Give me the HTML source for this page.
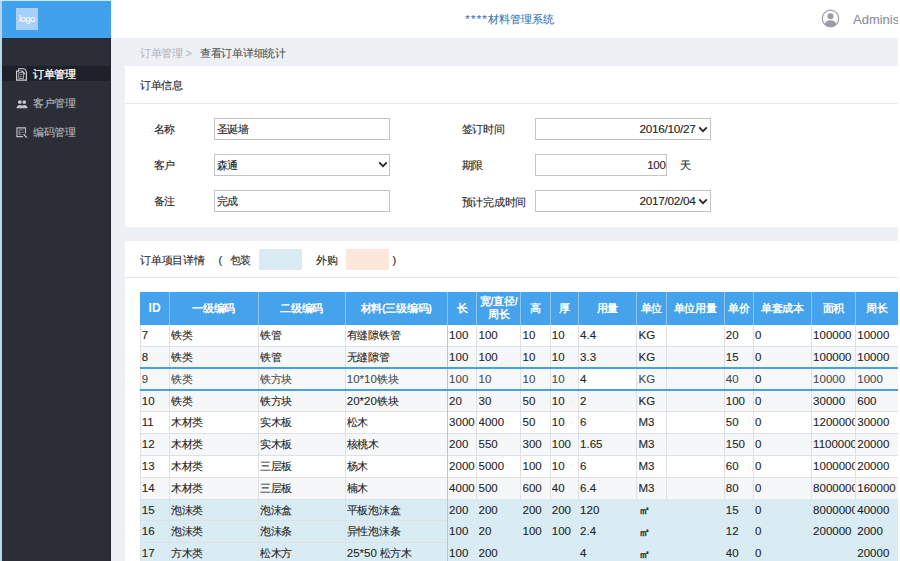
<!DOCTYPE html>
<html><head><meta charset="utf-8">
<style>
*{box-sizing:border-box;margin:0;padding:0}
html,body{width:900px;height:561px;overflow:hidden;background:#fff}
body{position:relative;font-family:"Liberation Sans",sans-serif;color:#333;font-size:11px;-webkit-text-stroke:0.1px currentColor}
.abs{position:absolute}
#side{left:0;top:0;width:111px;height:561px;background:#2b2e37}
#sidetop{left:0;top:0;width:111px;height:37.5px;background:#42a1ec}
#logo{left:16px;top:8px;width:22px;height:22px;background:#a6d0f5;color:#fff;font-size:9px;line-height:22px;text-align:center;letter-spacing:-0.3px}
#ledge{left:0;top:0;width:1.5px;height:561px;background:#b9d4ee}
.nav{left:1.5px;width:109.5px;height:16px;color:#b5b7bd;font-size:11px;letter-spacing:-0.3px;line-height:16px}
.nav .t{position:absolute;left:31.5px;top:0}
.nav.act{background:#1f2128;color:#fff;-webkit-text-stroke:0.3px #fff}
#hdr{left:111px;top:0;width:789px;height:37.5px;background:#fff}
#title{left:465.3px;top:11px;color:#3a78b8;font-size:11.3px;line-height:16px;white-space:nowrap}
#admin{left:853px;top:11px;color:#8c8c9a;font-size:13px;line-height:17px;white-space:nowrap}
#main{left:111px;top:37.5px;width:787px;height:523.5px;background:#edf0f4}
#rstrip{left:898px;top:0;width:2px;height:561px;background:#fff}
#crumb{left:140px;top:45px;font-size:11px;letter-spacing:-0.3px;line-height:16px;color:#555;white-space:nowrap}
#crumb .g{color:#b3b8bf}
.card{background:#fff}
#card1{left:125px;top:65.5px;width:772.5px;height:161px}
#card2{left:125px;top:241px;width:772.5px;height:320px}
.sep{height:1px;background:#e6e9ee}
.ct{font-size:11px;letter-spacing:-0.3px;line-height:16px;color:#252525;white-space:nowrap}
.lbl{font-size:11px;letter-spacing:-0.3px;line-height:16px;color:#252525;white-space:nowrap}
.hl{height:1px;background:#dfe0e3}
.vl{width:1px;background:#e0e1e4}
.hvl{width:1px;background:#8ec5f1}
.th{color:#fff;font-weight:bold;-webkit-text-stroke:0;letter-spacing:-0.3px;text-align:center;font-size:11px;white-space:nowrap}
.td{font-size:11px;letter-spacing:-0.3px;line-height:16px;color:#252525;white-space:nowrap;overflow:hidden}
.td.g{color:#4a4a4a}
.td.n{font-size:11.5px;letter-spacing:0}
.nn{font-size:11.5px;letter-spacing:0}
.inp{border:1px solid #c4c4c4;background:#fff;height:22px;font-size:11px;letter-spacing:-0.3px;line-height:20px;padding:0 2px 0 1.5px;color:#222;white-space:nowrap}
</style></head><body>
<div id="side" class="abs"></div>
<div id="sidetop" class="abs"></div>
<div id="logo" class="abs">logo</div>
<div id="ledge" class="abs"></div>
<div class="abs" style="left:109.5px;top:37.5px;width:1px;height:523.5px;background:#23262d"></div>
<div class="abs" style="left:0;top:0;width:111px;height:1px;background:#cfe6fa"></div>
<div class="abs nav act" style="top:66.4px;height:14.6px;line-height:14.6px"><span class="t" style="top:0.5px">订单管理</span></div>
<div class="abs nav" style="top:94.8px"><span class="t">客户管理</span></div>
<div class="abs nav" style="top:124.2px"><span class="t">编码管理</span></div>
<svg class="abs" style="left:16px;top:67.5px" width="11" height="13" viewBox="0 0 11 13"><path d="M0.6 3.1 L2.8 3.1 L2.8 0.7 L7.5 0.7 Q10.3 1.1 10.4 5 L10.4 12.1 L0.6 12.1 Z" fill="none" stroke="#d4d5d9" stroke-width="1.1"/><rect x="2.8" y="4.7" width="4.8" height="5.6" fill="none" stroke="#b9bbc0" stroke-width="0.9"/><path d="M4.5 2.7 Q8.5 3 8.8 6.5" fill="none" stroke="#e6e7ea" stroke-width="1"/><path d="M4 6.6 H6.4 M4 8.4 H6.4" stroke="#a8aab0" stroke-width="0.7"/></svg>
<svg class="abs" style="left:15.5px;top:98.5px" width="12" height="10" viewBox="0 0 12 10"><circle cx="3.8" cy="3.1" r="1.9" fill="#c3c5cc"/><circle cx="8.3" cy="3.1" r="1.9" fill="#c3c5cc"/><path d="M0.5 9.2 Q0.8 6.2 3.8 6 Q6 6 6 7 Q6.2 6 8.3 6 Q11.4 6.2 11.6 9.2 Z" fill="#c3c5cc"/></svg>
<svg class="abs" style="left:15.5px;top:126.5px" width="12" height="12" viewBox="0 0 12 12"><path d="M9.5 6.5 V0.9 H0.9 V9.6 H7" fill="none" stroke="#bfc1c8" stroke-width="1.1"/><path d="M3 2.9 V8 M3 2.9 H7.6 M3 5.3 H5 M5.4 5.3 H7.6 M3 7.6 H5.6" stroke="#9ea0a7" stroke-width="0.8"/><path d="M7.6 7.3 L10.9 10.6" stroke="#c6c8ce" stroke-width="1.3"/></svg>

<div id="hdr" class="abs"></div>
<div id="title" class="abs"><span style="letter-spacing:1.2px;font-size:11.5px">****</span>材料管理系统</div>
<svg class="abs" style="left:821px;top:9px" width="19" height="19" viewBox="0 0 19 19"><circle cx="9.5" cy="9.5" r="8.3" fill="none" stroke="#9fa0ab" stroke-width="1.2"/><circle cx="9.5" cy="7.2" r="3" fill="#9a9ba6"/><path d="M3.6 15.2 Q5 11.4 9.5 11.2 Q14 11.4 15.4 15.2 Q12.8 17.8 9.5 17.8 Q6.2 17.8 3.6 15.2 Z" fill="#9a9ba6"/></svg>
<div id="admin" class="abs">Adminis</div>
<div id="main" class="abs"></div>
<div id="crumb" class="abs"><span class="g">订单管理 &gt;</span><span style="position:absolute;left:60px;top:0">查看订单详细统计</span></div>

<div id="card1" class="abs card"></div>
<div class="abs ct" style="left:140px;top:77px">订单信息</div>
<div class="abs sep" style="left:125px;top:102.6px;width:772.5px"></div>

<div class="abs lbl" style="left:153.8px;top:120.6px">名称</div>
<div class="abs inp" style="left:214px;top:117.5px;width:176px">圣诞墙</div>
<div class="abs lbl" style="left:153.8px;top:157px">客户</div>
<div class="abs inp" style="left:214px;top:154.2px;width:176px">森通</div>
<div class="abs lbl" style="left:153.8px;top:193.4px">备注</div>
<div class="abs inp" style="left:214px;top:190.4px;width:176px">完成</div>

<div class="abs lbl" style="left:461.8px;top:121px">签订时间</div>
<div class="abs inp" style="left:534.5px;top:117.5px;width:176px;text-align:right;padding-right:14px;font-size:11.8px">2016/10/27</div>
<div class="abs lbl" style="left:461.8px;top:157px">期限</div>
<div class="abs inp" style="left:534.5px;top:154.2px;width:132px;text-align:right;padding-right:0px;font-size:11.5px">100</div>
<div class="abs lbl" style="left:679.7px;top:157px">天</div>
<div class="abs lbl" style="left:461.8px;top:193.5px">预计完成时间</div>
<div class="abs inp" style="left:534.5px;top:190.4px;width:176px;text-align:right;padding-right:14px;font-size:11.8px">2017/02/04</div>

<svg class="abs" style="left:378px;top:160.5px" width="10" height="7" viewBox="0 0 10 7"><path d="M1.2 1.4 L5 5.2 L8.8 1.4" fill="none" stroke="#222" stroke-width="1.7"/></svg>
<svg class="abs" style="left:697.5px;top:125.5px" width="10" height="7" viewBox="0 0 10 7"><path d="M1.2 1.4 L5 5.2 L8.8 1.4" fill="none" stroke="#222" stroke-width="1.7"/></svg>
<svg class="abs" style="left:697.5px;top:197.5px" width="10" height="7" viewBox="0 0 10 7"><path d="M1.2 1.4 L5 5.2 L8.8 1.4" fill="none" stroke="#222" stroke-width="1.7"/></svg>
<div id="card2" class="abs card"></div>
<div class="abs ct" style="left:140.2px;top:252.1px">订单项目详情</div>
<div class="abs ct" style="left:218.6px;top:252.1px">(</div>
<div class="abs ct" style="left:229.8px;top:252.1px">包装</div>
<div class="abs" style="left:258.7px;top:248.5px;width:43.5px;height:21.3px;background:#d9ebf3"></div>
<div class="abs ct" style="left:316.2px;top:252.1px">外购</div>
<div class="abs" style="left:345.5px;top:248.5px;width:43.8px;height:21.3px;background:#fde7d9"></div>
<div class="abs ct" style="left:392.5px;top:252.1px">)</div>
<div class="abs sep" style="left:125px;top:277.3px;width:772.5px"></div>

<div class="abs" style="left:140px;top:292.3px;width:758.0px;height:32.3px;background:#45a2ec"></div>
<div class="abs" style="left:140px;top:324.60px;width:758.0px;height:22.10px;background:#fff"></div>
<div class="abs" style="left:140px;top:346.40px;width:758.0px;height:22.10px;background:#f6f7f8"></div>
<div class="abs" style="left:140px;top:368.20px;width:758.0px;height:22.10px;background:#f6f8fa"></div>
<div class="abs" style="left:578.3px;top:368.20px;width:58.4px;height:21.80px;background:#fff"></div>
<div class="abs" style="left:140px;top:390.00px;width:758.0px;height:22.10px;background:#f6f7f8"></div>
<div class="abs" style="left:140px;top:411.80px;width:758.0px;height:22.10px;background:#fff"></div>
<div class="abs" style="left:140px;top:433.60px;width:758.0px;height:22.10px;background:#f6f7f8"></div>
<div class="abs" style="left:140px;top:455.40px;width:758.0px;height:22.10px;background:#fff"></div>
<div class="abs" style="left:140px;top:477.20px;width:758.0px;height:22.10px;background:#f6f7f8"></div>
<div class="abs" style="left:140px;top:499.00px;width:758.0px;height:62.00px;background:#d9ebf3"></div>
<div class="abs hl" style="left:140px;top:345.90px;width:758.0px"></div>
<div class="abs hl" style="left:140px;top:367.70px;width:758.0px"></div>
<div class="abs hl" style="left:140px;top:389.50px;width:758.0px"></div>
<div class="abs hl" style="left:140px;top:411.30px;width:758.0px"></div>
<div class="abs hl" style="left:140px;top:433.10px;width:758.0px"></div>
<div class="abs hl" style="left:140px;top:454.90px;width:758.0px"></div>
<div class="abs hl" style="left:140px;top:476.70px;width:758.0px"></div>
<div class="abs hl" style="left:140px;top:498.50px;width:307.3px"></div>
<div class="abs hl" style="left:140px;top:520.30px;width:307.3px"></div>
<div class="abs hl" style="left:140px;top:542.10px;width:307.3px"></div>
<div class="abs vl" style="left:139.50px;top:324.6px;height:239.8px"></div>
<div class="abs vl" style="left:168.70px;top:324.6px;height:239.8px"></div>
<div class="abs vl" style="left:257.80px;top:324.6px;height:239.8px"></div>
<div class="abs vl" style="left:344.50px;top:324.6px;height:239.8px"></div>
<div class="abs vl" style="left:446.80px;top:324.6px;height:239.8px;background:#c2c4c8"></div>
<div class="abs vl" style="left:476.20px;top:324.6px;height:174.4px"></div>
<div class="abs vl" style="left:520.20px;top:324.6px;height:174.4px"></div>
<div class="abs vl" style="left:549.50px;top:324.6px;height:174.4px"></div>
<div class="abs vl" style="left:577.80px;top:324.6px;height:174.4px"></div>
<div class="abs vl" style="left:636.20px;top:324.6px;height:174.4px"></div>
<div class="abs vl" style="left:665.50px;top:324.6px;height:174.4px"></div>
<div class="abs vl" style="left:723.50px;top:324.6px;height:174.4px"></div>
<div class="abs vl" style="left:752.80px;top:324.6px;height:174.4px"></div>
<div class="abs vl" style="left:810.80px;top:324.6px;height:174.4px"></div>
<div class="abs vl" style="left:855.00px;top:324.6px;height:174.4px"></div>
<div class="abs hvl" style="left:168.70px;top:292.3px;height:32.3px"></div>
<div class="abs hvl" style="left:257.80px;top:292.3px;height:32.3px"></div>
<div class="abs hvl" style="left:344.50px;top:292.3px;height:32.3px"></div>
<div class="abs hvl" style="left:446.80px;top:292.3px;height:32.3px"></div>
<div class="abs hvl" style="left:476.20px;top:292.3px;height:32.3px"></div>
<div class="abs hvl" style="left:520.20px;top:292.3px;height:32.3px"></div>
<div class="abs hvl" style="left:549.50px;top:292.3px;height:32.3px"></div>
<div class="abs hvl" style="left:577.80px;top:292.3px;height:32.3px"></div>
<div class="abs hvl" style="left:636.20px;top:292.3px;height:32.3px"></div>
<div class="abs hvl" style="left:665.50px;top:292.3px;height:32.3px"></div>
<div class="abs hvl" style="left:723.50px;top:292.3px;height:32.3px"></div>
<div class="abs hvl" style="left:752.80px;top:292.3px;height:32.3px"></div>
<div class="abs hvl" style="left:810.80px;top:292.3px;height:32.3px"></div>
<div class="abs hvl" style="left:855.00px;top:292.3px;height:32.3px"></div>
<div class="abs th" style="left:140.0px;top:300.45px;width:29.2px;line-height:16px;font-size:12px;letter-spacing:0">ID</div>
<div class="abs th" style="left:169.2px;top:300.45px;width:89.1px;line-height:16px">一级编码</div>
<div class="abs th" style="left:258.3px;top:300.45px;width:86.7px;line-height:16px">二级编码</div>
<div class="abs th" style="left:345.0px;top:300.45px;width:102.3px;line-height:16px">材料(三级编码)</div>
<div class="abs th" style="left:447.3px;top:300.45px;width:29.4px;line-height:16px">长</div>
<div class="abs th" style="left:476.7px;top:295.45px;width:44.0px;line-height:13px">宽/直径/<br>周长</div>
<div class="abs th" style="left:520.7px;top:300.45px;width:29.3px;line-height:16px">高</div>
<div class="abs th" style="left:550.0px;top:300.45px;width:28.3px;line-height:16px">厚</div>
<div class="abs th" style="left:578.3px;top:300.45px;width:58.4px;line-height:16px">用量</div>
<div class="abs th" style="left:636.7px;top:300.45px;width:29.3px;line-height:16px">单位</div>
<div class="abs th" style="left:666.0px;top:300.45px;width:58.0px;line-height:16px">单位用量</div>
<div class="abs th" style="left:724.0px;top:300.45px;width:29.3px;line-height:16px">单价</div>
<div class="abs th" style="left:753.3px;top:300.45px;width:58.0px;line-height:16px">单套成本</div>
<div class="abs th" style="left:811.3px;top:300.45px;width:44.2px;line-height:16px">面积</div>
<div class="abs th" style="left:855.5px;top:300.45px;width:42.5px;line-height:16px">周长</div>
<div class="abs td n" style="left:141.8px;top:327.20px;width:27.4px">7</div>
<div class="abs td" style="left:171.0px;top:327.20px;width:87.3px">铁类</div>
<div class="abs td" style="left:260.1px;top:327.20px;width:84.9px">铁管</div>
<div class="abs td" style="left:346.8px;top:327.20px;width:100.5px">有缝隙铁管</div>
<div class="abs td n" style="left:449.1px;top:327.20px;width:27.6px">100</div>
<div class="abs td n" style="left:478.5px;top:327.20px;width:42.2px">100</div>
<div class="abs td n" style="left:522.5px;top:327.20px;width:27.5px">10</div>
<div class="abs td n" style="left:551.8px;top:327.20px;width:26.5px">10</div>
<div class="abs td n" style="left:580.1px;top:327.20px;width:56.6px">4.4</div>
<div class="abs td n" style="left:638.5px;top:327.20px;width:27.5px">KG</div>
<div class="abs td n" style="left:725.8px;top:327.20px;width:27.5px">20</div>
<div class="abs td n" style="left:755.1px;top:327.20px;width:56.2px">0</div>
<div class="abs td n" style="left:813.1px;top:327.20px;width:42.4px">100000</div>
<div class="abs td n" style="left:857.3px;top:327.20px;width:40.7px">10000</div>
<div class="abs td n" style="left:141.8px;top:349.00px;width:27.4px">8</div>
<div class="abs td" style="left:171.0px;top:349.00px;width:87.3px">铁类</div>
<div class="abs td" style="left:260.1px;top:349.00px;width:84.9px">铁管</div>
<div class="abs td" style="left:346.8px;top:349.00px;width:100.5px">无缝隙管</div>
<div class="abs td n" style="left:449.1px;top:349.00px;width:27.6px">100</div>
<div class="abs td n" style="left:478.5px;top:349.00px;width:42.2px">100</div>
<div class="abs td n" style="left:522.5px;top:349.00px;width:27.5px">10</div>
<div class="abs td n" style="left:551.8px;top:349.00px;width:26.5px">10</div>
<div class="abs td n" style="left:580.1px;top:349.00px;width:56.6px">3.3</div>
<div class="abs td n" style="left:638.5px;top:349.00px;width:27.5px">KG</div>
<div class="abs td n" style="left:725.8px;top:349.00px;width:27.5px">15</div>
<div class="abs td n" style="left:755.1px;top:349.00px;width:56.2px">0</div>
<div class="abs td n" style="left:813.1px;top:349.00px;width:42.4px">100000</div>
<div class="abs td n" style="left:857.3px;top:349.00px;width:40.7px">10000</div>
<div class="abs td g n" style="left:141.8px;top:370.80px;width:27.4px">9</div>
<div class="abs td g" style="left:171.0px;top:370.80px;width:87.3px">铁类</div>
<div class="abs td g" style="left:260.1px;top:370.80px;width:84.9px">铁方块</div>
<div class="abs td g" style="left:346.8px;top:370.80px;width:100.5px"><span class="nn">10*10</span>铁块</div>
<div class="abs td g n" style="left:449.1px;top:370.80px;width:27.6px">100</div>
<div class="abs td g n" style="left:478.5px;top:370.80px;width:42.2px">10</div>
<div class="abs td g n" style="left:522.5px;top:370.80px;width:27.5px">10</div>
<div class="abs td g n" style="left:551.8px;top:370.80px;width:26.5px">10</div>
<div class="abs td n" style="left:580.1px;top:370.80px;width:56.6px">4</div>
<div class="abs td g n" style="left:638.5px;top:370.80px;width:27.5px">KG</div>
<div class="abs td g n" style="left:725.8px;top:370.80px;width:27.5px">40</div>
<div class="abs td n" style="left:755.1px;top:370.80px;width:56.2px">0</div>
<div class="abs td g n" style="left:813.1px;top:370.80px;width:42.4px">10000</div>
<div class="abs td g n" style="left:857.3px;top:370.80px;width:40.7px">1000</div>
<div class="abs td n" style="left:141.8px;top:392.60px;width:27.4px">10</div>
<div class="abs td" style="left:171.0px;top:392.60px;width:87.3px">铁类</div>
<div class="abs td" style="left:260.1px;top:392.60px;width:84.9px">铁方块</div>
<div class="abs td" style="left:346.8px;top:392.60px;width:100.5px"><span class="nn">20*20</span>铁块</div>
<div class="abs td n" style="left:449.1px;top:392.60px;width:27.6px">20</div>
<div class="abs td n" style="left:478.5px;top:392.60px;width:42.2px">30</div>
<div class="abs td n" style="left:522.5px;top:392.60px;width:27.5px">50</div>
<div class="abs td n" style="left:551.8px;top:392.60px;width:26.5px">10</div>
<div class="abs td n" style="left:580.1px;top:392.60px;width:56.6px">2</div>
<div class="abs td n" style="left:638.5px;top:392.60px;width:27.5px">KG</div>
<div class="abs td n" style="left:725.8px;top:392.60px;width:27.5px">100</div>
<div class="abs td n" style="left:755.1px;top:392.60px;width:56.2px">0</div>
<div class="abs td n" style="left:813.1px;top:392.60px;width:42.4px">30000</div>
<div class="abs td n" style="left:857.3px;top:392.60px;width:40.7px">600</div>
<div class="abs td n" style="left:141.8px;top:414.40px;width:27.4px">11</div>
<div class="abs td" style="left:171.0px;top:414.40px;width:87.3px">木材类</div>
<div class="abs td" style="left:260.1px;top:414.40px;width:84.9px">实木板</div>
<div class="abs td" style="left:346.8px;top:414.40px;width:100.5px">松木</div>
<div class="abs td n" style="left:449.1px;top:414.40px;width:27.6px">3000</div>
<div class="abs td n" style="left:478.5px;top:414.40px;width:42.2px">4000</div>
<div class="abs td n" style="left:522.5px;top:414.40px;width:27.5px">50</div>
<div class="abs td n" style="left:551.8px;top:414.40px;width:26.5px">10</div>
<div class="abs td n" style="left:580.1px;top:414.40px;width:56.6px">6</div>
<div class="abs td n" style="left:638.5px;top:414.40px;width:27.5px">M3</div>
<div class="abs td n" style="left:725.8px;top:414.40px;width:27.5px">50</div>
<div class="abs td n" style="left:755.1px;top:414.40px;width:56.2px">0</div>
<div class="abs td n" style="left:813.1px;top:414.40px;width:42.4px">1200000</div>
<div class="abs td n" style="left:857.3px;top:414.40px;width:40.7px">30000</div>
<div class="abs td n" style="left:141.8px;top:436.20px;width:27.4px">12</div>
<div class="abs td" style="left:171.0px;top:436.20px;width:87.3px">木材类</div>
<div class="abs td" style="left:260.1px;top:436.20px;width:84.9px">实木板</div>
<div class="abs td" style="left:346.8px;top:436.20px;width:100.5px">核桃木</div>
<div class="abs td n" style="left:449.1px;top:436.20px;width:27.6px">200</div>
<div class="abs td n" style="left:478.5px;top:436.20px;width:42.2px">550</div>
<div class="abs td n" style="left:522.5px;top:436.20px;width:27.5px">300</div>
<div class="abs td n" style="left:551.8px;top:436.20px;width:26.5px">100</div>
<div class="abs td n" style="left:580.1px;top:436.20px;width:56.6px">1.65</div>
<div class="abs td n" style="left:638.5px;top:436.20px;width:27.5px">M3</div>
<div class="abs td n" style="left:725.8px;top:436.20px;width:27.5px">150</div>
<div class="abs td n" style="left:755.1px;top:436.20px;width:56.2px">0</div>
<div class="abs td n" style="left:813.1px;top:436.20px;width:42.4px">1100000</div>
<div class="abs td n" style="left:857.3px;top:436.20px;width:40.7px">20000</div>
<div class="abs td n" style="left:141.8px;top:458.00px;width:27.4px">13</div>
<div class="abs td" style="left:171.0px;top:458.00px;width:87.3px">木材类</div>
<div class="abs td" style="left:260.1px;top:458.00px;width:84.9px">三层板</div>
<div class="abs td" style="left:346.8px;top:458.00px;width:100.5px">杨木</div>
<div class="abs td n" style="left:449.1px;top:458.00px;width:27.6px">2000</div>
<div class="abs td n" style="left:478.5px;top:458.00px;width:42.2px">5000</div>
<div class="abs td n" style="left:522.5px;top:458.00px;width:27.5px">100</div>
<div class="abs td n" style="left:551.8px;top:458.00px;width:26.5px">10</div>
<div class="abs td n" style="left:580.1px;top:458.00px;width:56.6px">6</div>
<div class="abs td n" style="left:638.5px;top:458.00px;width:27.5px">M3</div>
<div class="abs td n" style="left:725.8px;top:458.00px;width:27.5px">60</div>
<div class="abs td n" style="left:755.1px;top:458.00px;width:56.2px">0</div>
<div class="abs td n" style="left:813.1px;top:458.00px;width:42.4px">1000000</div>
<div class="abs td n" style="left:857.3px;top:458.00px;width:40.7px">20000</div>
<div class="abs td n" style="left:141.8px;top:479.80px;width:27.4px">14</div>
<div class="abs td" style="left:171.0px;top:479.80px;width:87.3px">木材类</div>
<div class="abs td" style="left:260.1px;top:479.80px;width:84.9px">三层板</div>
<div class="abs td" style="left:346.8px;top:479.80px;width:100.5px">楠木</div>
<div class="abs td n" style="left:449.1px;top:479.80px;width:27.6px">4000</div>
<div class="abs td n" style="left:478.5px;top:479.80px;width:42.2px">500</div>
<div class="abs td n" style="left:522.5px;top:479.80px;width:27.5px">600</div>
<div class="abs td n" style="left:551.8px;top:479.80px;width:26.5px">40</div>
<div class="abs td n" style="left:580.1px;top:479.80px;width:56.6px">6.4</div>
<div class="abs td n" style="left:638.5px;top:479.80px;width:27.5px">M3</div>
<div class="abs td n" style="left:725.8px;top:479.80px;width:27.5px">80</div>
<div class="abs td n" style="left:755.1px;top:479.80px;width:56.2px">0</div>
<div class="abs td n" style="left:813.1px;top:479.80px;width:42.4px">8000000</div>
<div class="abs td n" style="left:857.3px;top:479.80px;width:40.7px">160000</div>
<div class="abs td n" style="left:141.8px;top:501.60px;width:27.4px">15</div>
<div class="abs td" style="left:171.0px;top:501.60px;width:87.3px">泡沫类</div>
<div class="abs td" style="left:260.1px;top:501.60px;width:84.9px">泡沫盒</div>
<div class="abs td" style="left:346.8px;top:501.60px;width:100.5px">平板泡沫盒</div>
<div class="abs td n" style="left:449.1px;top:501.60px;width:27.6px">200</div>
<div class="abs td n" style="left:478.5px;top:501.60px;width:42.2px">200</div>
<div class="abs td n" style="left:522.5px;top:501.60px;width:27.5px">200</div>
<div class="abs td n" style="left:551.8px;top:501.60px;width:26.5px">200</div>
<div class="abs td n" style="left:580.1px;top:501.60px;width:56.6px">120</div>
<div class="abs td" style="left:638.5px;top:501.60px;width:27.5px;-webkit-text-stroke:0.4px #252525;margin-top:0.7px">㎡</div>
<div class="abs td n" style="left:725.8px;top:501.60px;width:27.5px">15</div>
<div class="abs td n" style="left:755.1px;top:501.60px;width:56.2px">0</div>
<div class="abs td n" style="left:813.1px;top:501.60px;width:42.4px">8000000</div>
<div class="abs td n" style="left:857.3px;top:501.60px;width:40.7px">40000</div>
<div class="abs td n" style="left:141.8px;top:523.40px;width:27.4px">16</div>
<div class="abs td" style="left:171.0px;top:523.40px;width:87.3px">泡沫类</div>
<div class="abs td" style="left:260.1px;top:523.40px;width:84.9px">泡沫条</div>
<div class="abs td" style="left:346.8px;top:523.40px;width:100.5px">异性泡沫条</div>
<div class="abs td n" style="left:449.1px;top:523.40px;width:27.6px">100</div>
<div class="abs td n" style="left:478.5px;top:523.40px;width:42.2px">20</div>
<div class="abs td n" style="left:522.5px;top:523.40px;width:27.5px">100</div>
<div class="abs td n" style="left:551.8px;top:523.40px;width:26.5px">100</div>
<div class="abs td n" style="left:580.1px;top:523.40px;width:56.6px">2.4</div>
<div class="abs td" style="left:638.5px;top:523.40px;width:27.5px;-webkit-text-stroke:0.4px #252525;margin-top:0.7px">㎡</div>
<div class="abs td n" style="left:725.8px;top:523.40px;width:27.5px">12</div>
<div class="abs td n" style="left:755.1px;top:523.40px;width:56.2px">0</div>
<div class="abs td n" style="left:813.1px;top:523.40px;width:42.4px">200000</div>
<div class="abs td n" style="left:857.3px;top:523.40px;width:40.7px">2000</div>
<div class="abs td n" style="left:141.8px;top:545.20px;width:27.4px">17</div>
<div class="abs td" style="left:171.0px;top:545.20px;width:87.3px">方木类</div>
<div class="abs td" style="left:260.1px;top:545.20px;width:84.9px">松木方</div>
<div class="abs td" style="left:346.8px;top:545.20px;width:100.5px"><span class="nn">25*50</span> 松方木</div>
<div class="abs td n" style="left:449.1px;top:545.20px;width:27.6px">100</div>
<div class="abs td n" style="left:478.5px;top:545.20px;width:42.2px">200</div>
<div class="abs td n" style="left:580.1px;top:545.20px;width:56.6px">4</div>
<div class="abs td" style="left:638.5px;top:545.20px;width:27.5px;-webkit-text-stroke:0.4px #252525;margin-top:0.7px">㎡</div>
<div class="abs td n" style="left:725.8px;top:545.20px;width:27.5px">40</div>
<div class="abs td n" style="left:755.1px;top:545.20px;width:56.2px">0</div>
<div class="abs td n" style="left:857.3px;top:545.20px;width:40.7px">20000</div>
<div class="abs" style="left:140px;top:367.20px;width:758.0px;height:2px;background:#4a9fe3"></div>
<div class="abs" style="left:140px;top:389.00px;width:758.0px;height:2px;background:#4a9fe3"></div>
<div id="rstrip" class="abs"></div>
</body></html>
